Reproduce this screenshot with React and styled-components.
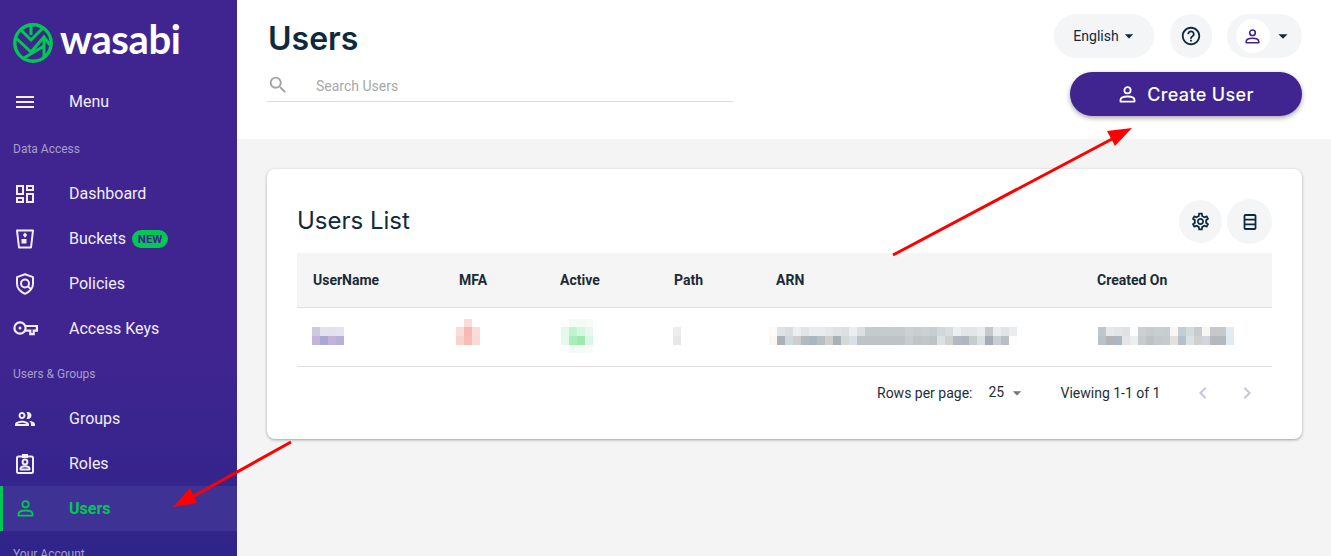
import React from "react";
import styled, { createGlobalStyle } from "styled-components";
import { MdMenu, MdOutlineDashboard, MdOutlinePeople, MdSearch, MdHelpOutline, MdArrowDropDown, MdChevronLeft, MdChevronRight, MdOutlineSettings } from "react-icons/md";

const Global = createGlobalStyle`
  html, body { margin: 0; padding: 0; height: 100%; overflow: hidden; background: #f4f4f4; }
  body { font-family: Roboto, "Liberation Sans", sans-serif; color: #0e2a3c; }
  #root { height: 100%; }
  * { box-sizing: border-box; }
`;

const Page = styled.div`
  position: relative;
  display: flex;
  width: 100%;
  height: 100vh;
  overflow: hidden;
`;
const Sidebar = styled.aside`
  flex: 0 0 237px;
  height: 100%;
  overflow: hidden;
  background: linear-gradient(180deg, #402590 0%, #402590 62%, #2f2489 100%);
  color: #fff;
`;
const LogoRow = styled.div`
  display: flex;
  align-items: center;
  gap: 7px;
  height: 79px;
  padding: 7px 0 0 13px;
`;
const LogoWord = styled.span`
  font-family: Lato, sans-serif;
  font-weight: 700;
  font-size: 40px;
  line-height: 1;
  letter-spacing: -0.4px;
  color: #fff;
  margin-top: -8px;
`;
const NavRow = styled.div`
  display: flex;
  align-items: center;
  height: 45px;
  padding-left: 13px;
  font-size: 16px;
  color: ${p => (p.$active ? "#00c853" : "#f1eef8")};
  font-weight: ${p => (p.$active ? 700 : 400)};
  background: ${p => (p.$active ? "#3f3295" : "transparent")};
  box-shadow: ${p => (p.$active ? "inset 3px 0 0 #00c853" : "none")};
`;
const NavIcon = styled.span`
  flex: 0 0 56px;
  display: flex;
  align-items: center;
  padding-left: ${p => p.$pad ?? 0}px;
`;
const SectionLabel = styled.div`
  display: flex;
  align-items: center;
  height: 45px;
  margin-top: ${p => p.$top ?? 0}px;
  padding-left: 13px;
  font-size: 12px;
  color: #a79fc6;
`;
const NewBadge = styled.span`
  display: inline-flex;
  align-items: center;
  justify-content: center;
  width: 36px;
  height: 18px;
  margin: 1px 0 0 6px;
  border-radius: 9px;
  background: #00c853;
  color: #402590;
  font-size: 11.5px;
  font-weight: 700;
`;
const Main = styled.main`
  flex: 1;
  min-width: 0;
  display: flex;
  flex-direction: column;
`;
const Header = styled.header`
  display: flex;
  justify-content: space-between;
  height: 139px;
  padding: 14px 29px 0 30px;
  background: #fff;
`;
const TitleColumn = styled.div`
  width: 466px;
`;
const Title = styled.h1`
  margin: 0 0 0 1px;
  height: 48px;
  font-family: Inter, sans-serif;
  font-size: 32px;
  font-weight: 600;
  line-height: 50px;
  color: #0e2a3c;
`;
const SearchBar = styled.div`
  display: flex;
  align-items: center;
  height: 40px;
  padding-top: 8px;
  border-bottom: 1px solid #dcdcdc;
  color: #a8a8a8;
  font-size: 14px;
`;
const SearchIcon = styled.span`
  flex: 0 0 49px;
  display: flex;
  margin-top: -1px;
  color: #a2a2a2;
`;
const RightColumn = styled.div`
  display: flex;
  flex-direction: column;
  align-items: flex-end;
  gap: 14px;
`;
const TopControls = styled.div`
  display: flex;
  height: 44px;
  gap: 15px;
`;
const Pill = styled.div`
  display: flex;
  align-items: center;
  justify-content: center;
  width: ${p => p.$w}px;
  height: 44px;
  border-radius: 22px;
  background: #f4f5f6;
  color: #0e2a3c;
  font-size: 14px;
`;
const LanguagePill = styled(Pill)`
  padding-left: 4px;
`;
const HelpPill = styled(Pill)`
  margin-left: 1px;
`;
const Avatar = styled.span`
  display: flex;
  align-items: center;
  justify-content: center;
  width: 34px;
  height: 34px;
  margin: 0 2px 0 0;
  border-radius: 50%;
  background: #fff;
  color: #402590;
`;
const CreateButton = styled.button`
  display: flex;
  align-items: center;
  justify-content: center;
  gap: 10px;
  width: 232px;
  height: 44px;
  border: 0;
  border-radius: 22px;
  background: #402590;
  color: #fff;
  font-family: Inter, sans-serif;
  font-size: 18px;
  letter-spacing: 0.35px;
  font-weight: 500;
  box-shadow: 0 2px 5px rgba(0, 0, 0, 0.35);
`;
const Content = styled.div`
  flex: 1;
  padding: 30px 29px 0 30px;
`;
const Card = styled.section`
  height: 270px;
  padding: 30px 30px 0;
  background: #fff;
  border-radius: 8px;
  box-shadow: 0 1px 3px rgba(0, 0, 0, 0.35);
`;
const CardHeader = styled.div`
  display: flex;
  align-items: center;
  justify-content: space-between;
  height: 54px;
  padding-bottom: 9px;
`;
const CardTitle = styled.h2`
  margin: -2px 0 0;
  font-family: Inter, sans-serif;
  font-size: 24px;
  font-weight: 400;
  color: #0e2a3c;
`;
const CardActions = styled.div`
  display: flex;
  align-items: center;
  gap: 5px;
`;
const RoundButton = styled.span`
  display: flex;
  align-items: center;
  justify-content: center;
  width: ${p => p.$s}px;
  height: ${p => p.$s}px;
  border-radius: 50%;
  background: #f4f5f6;
  color: #0e2a3c;
`;
const Row = styled.div`
  display: grid;
  grid-template-columns: 146px 101px 114px 102px 321px 1fr;
  padding-left: 16px;
  border-bottom: 1px solid #dedede;
`;
const HeadRow = styled(Row)`
  align-items: center;
  height: 55px;
  background: #f5f5f5;
  font-size: 14px;
  font-weight: 700;
  color: #1b2b36;
`;
const BodyRow = styled(Row)`
  align-items: start;
  height: 59px;
  padding-top: 19px;
`;
const Mosaic = styled.div`
  display: flex;
  flex-direction: column;
  margin-left: ${p => p.$x}px;
  margin-top: ${p => p.$y}px;
`;
const MosaicRow = styled.div`
  display: flex;
  height: ${p => p.$h}px;
  margin-left: ${p => p.$x ?? 0}px;
`;
const Pixel = styled.i`
  display: block;
  width: 8px;
  height: 100%;
`;
const Pagination = styled.div`
  display: flex;
  align-items: center;
  height: 52px;
  padding: 0 0 0 580px;
  font-size: 14px;
  color: #1e2e38;
`;
const RowsValue = styled.span`
  display: flex;
  align-items: center;
  margin: -3px 0 0 16px;
  width: 72px;
  color: #1e2e38;
`;
const Caret = styled.span`
  display: flex;
  margin-left: 3px;
  margin-top: 2px;
  color: #757575;
`;
const Viewing = styled.span`
  width: 131px;
`;
const Pager = styled.span`
  display: flex;
  gap: 20px;
  color: #c9c3e0;
`;
const Overlay = styled.svg`
  position: absolute;
  inset: 0;
  width: 1331px;
  height: 556px;
  pointer-events: none;
`;

const Person = ({ size = 20 }) => (
  <svg width={size} height={size} viewBox="0 0 20 20" fill="none" stroke="currentColor" strokeWidth="1.9">
    <circle cx="10" cy="5.6" r="3.3" />
    <path d="M2.6 16c0-2.6 3.3-3.9 7.4-3.9s7.4 1.3 7.4 3.9v1.4H2.6z" strokeLinejoin="round" />
  </svg>
);
const Bucket = () => (
  <svg width="18" height="20" viewBox="0 0 18 20" fill="none" stroke="currentColor" strokeWidth="2">
    <path d="M1 1.5h16l-2 17H3z" strokeLinejoin="round" />
    <path d="M9 3.5l2.2 2.6L9 8.7 6.8 6.1z" fill="currentColor" stroke="none" />
    <rect x="5.5" y="10" width="5" height="4.5" fill="currentColor" stroke="none" />
  </svg>
);
const Shield = () => (
  <svg width="18" height="22" viewBox="0 0 18 22" fill="none" stroke="currentColor" strokeWidth="2">
    <path d="M9 1.2l8 2.9v6.6c0 4.6-3.4 8-8 10.1-4.6-2.1-8-5.5-8-10.1V4.1z" strokeLinejoin="round" />
    <circle cx="9" cy="10.5" r="4" />
    <path d="M12 13.5l3 2.6" />
  </svg>
);
const Key = () => (
  <svg width="25" height="15" viewBox="0 0 25 15" fill="none" stroke="currentColor" strokeWidth="2.2">
    <circle cx="7" cy="7" r="5.6" />
    <circle cx="7" cy="7" r="1.5" fill="currentColor" stroke="none" />
    <path d="M12.5 5h11.4v4.6h-3.2v3.6h-3.4V9.6h-4.8" />
  </svg>
);
const Badge = () => (
  <svg width="18" height="20" viewBox="0 0 18 20" fill="none" stroke="currentColor" strokeWidth="2">
    <rect x="1" y="2.5" width="16" height="16.5" rx="1.5" />
    <rect x="6" y="0" width="6" height="4" fill="currentColor" stroke="none" />
    <circle cx="9" cy="8" r="2.4" />
    <path d="M4.5 15.5v-.8c0-1.6 2.1-2.5 4.5-2.5s4.5.9 4.5 2.5v.8z" strokeLinejoin="round" />
  </svg>
);
const Columns = () => (
  <svg width="14" height="16" viewBox="0 0 14 16" fill="none" stroke="currentColor" strokeWidth="1.8">
    <rect x="1.5" y="1" width="11" height="14" rx="1" />
    <path d="M1.5 5.7h11M1.5 10.3h11" />
  </svg>
);
const Logo = () => (
  <svg width="40" height="40" viewBox="0 0 40 40" fill="none" stroke="#00c853">
    <circle cx="20" cy="20" r="18.2" strokeWidth="3.4" />
    <g strokeWidth="3" fill="none">
      <path d="M18 2v10" />
      <path d="M8 7l10 10L30 5" />
      <path d="M3 15l15 14 13-15 6 8" />
      <path d="M31 14v21" />
      <path d="M11 35l20-12" />
    </g>
  </svg>
);

const user = [["#cfc8e3", "#e4e1f0", "#e4e1ef", "#e5e3f2"], ["#c2b5da", "#aca6d4", "#c2b4d8", "#b6b0da"]];
const mfa = [["#fbdcd9"], ["#fbdcd8", "#f8b9b4", "#fbdcd8"], ["#f9d2cd", "#f8bdb7", "#fadad5"]];
const active = [
  ["#fbfefc", "#f3fbf5", "#f3fbf5", "#f5fcf7"],
  ["#e5f8eb", "#c0f3d2", "#d6f6e2", "#e7f9ef"],
  ["#e6f9ec", "#a9eeb9", "#9ceab0", "#d9f7e6"],
  ["#fbfefc", "#f4fbf6", "#f4fbf6", "#f8fdf9"],
];
const path = [["#ecedef"], ["#e6e7e9"]];
const arn = [
  ["#fdfbf8", "#e0e3e5", "#d9dde0", "#ebedee", "#e0e4e6", "#e9ebed", "#e8eaec", "#e4e6e8", "#e0e3e5", "#dce0e1", "#eceeef", "#dadfe1", "#c5cacd", "#c5cacd", "#c6cbce", "#c6cbce", "#c6cbce", "#cdd1d4", "#c9ced1", "#cbd0d3", "#c6ccd2", "#d2d7db", "#d8dde0", "#eceef0", "#e2e5e8", "#e3e6e9", "#e9ebed", "#c4c9cc", "#e9ebee", "#e0e4e7", "#eaecee"],
  ["#faf7f2", "#abb1b5", "#cdd9df", "#cdcfcf", "#b0bbc0", "#a8b7c0", "#b8bfc3", "#cfcfcf", "#a7b0b7", "#d5d8d8", "#d9e1e8", "#bec3c7", "#bec3c7", "#bec3c7", "#bec3c7", "#bec3c7", "#bec3c7", "#c8cbcf", "#bfc4c8", "#c1c6c9", "#bcc3c9", "#dde0e1", "#cfd2d0", "#b3b9c0", "#b0b7be", "#c7cccd", "#d9e0e3", "#a4abb2", "#c8ced3", "#b9bfc3", "#fdfdfe"],
];
const created = [
  ["#c1c6ca", "#e6e8ea", "#e1e4e8", "#dfe1e3", "#fdfdfd", "#cbcfd2", "#c6cbce", "#c9ced1", "#c7cdd1", "#f8f6f3", "#c3cdd4", "#d5dade", "#c7cbce", "#f7f6f3", "#c5c9cc", "#c5c9cc", "#e2ebf3"],
  ["#bcc1c6", "#b1b5b8", "#abb7c1", "#e3e5e8", "#eceef1", "#c6cbce", "#bcc2c5", "#c3c8cb", "#c5cacd", "#e2e1e0", "#b6c2c9", "#dde1e5", "#cfd1d1", "#d1d5de", "#b5b9bc", "#b3babd", "#e1e9f1"],
];

const Blur = ({ rows, x, y = 0, heights = [], offsets = [] }) => (
  <Mosaic $x={x} $y={y}>
    {rows.map((r, i) => (
      <MosaicRow key={i} $h={heights[i] ?? 9} $x={offsets[i] ?? 0}>
        {r.map((c, j) => (
          <Pixel key={j} style={{ background: c }} />
        ))}
      </MosaicRow>
    ))}
  </Mosaic>
);

export default function App() {
  return (
    <Page>
      <Global />
      <Sidebar>
        <LogoRow>
          <Logo />
          <LogoWord>wasabi</LogoWord>
        </LogoRow>
        <NavRow><NavIcon><MdMenu size={24} /></NavIcon>Menu</NavRow>
        <SectionLabel $top={2}>Data Access</SectionLabel>
        <NavRow><NavIcon><MdOutlineDashboard size={24} /></NavIcon>Dashboard</NavRow>
        <NavRow><NavIcon $pad={3}><Bucket /></NavIcon>Buckets<NewBadge>NEW</NewBadge></NavRow>
        <NavRow><NavIcon $pad={3}><Shield /></NavIcon>Policies</NavRow>
        <NavRow><NavIcon><Key /></NavIcon>Access Keys</NavRow>
        <SectionLabel>Users &amp; Groups</SectionLabel>
        <NavRow><NavIcon><MdOutlinePeople size={24} /></NavIcon>Groups</NavRow>
        <NavRow><NavIcon $pad={3}><Badge /></NavIcon>Roles</NavRow>
        <NavRow $active><NavIcon $pad={3}><Person size={19} /></NavIcon>Users</NavRow>
        <SectionLabel>Your Account</SectionLabel>
      </Sidebar>
      <Main>
        <Header>
          <TitleColumn>
            <Title>Users</Title>
            <SearchBar>
              <SearchIcon><MdSearch size={22} /></SearchIcon>
              Search Users
            </SearchBar>
          </TitleColumn>
          <RightColumn>
            <TopControls>
              <LanguagePill $w={100}>English<MdArrowDropDown size={20} /></LanguagePill>
              <HelpPill $w={42}><MdHelpOutline size={22} /></HelpPill>
              <Pill $w={75}>
                <Avatar><Person size={17} /></Avatar>
                <MdArrowDropDown size={22} />
              </Pill>
            </TopControls>
            <CreateButton><Person size={19} />Create User</CreateButton>
          </RightColumn>
        </Header>
        <Content>
          <Card>
            <CardHeader>
              <CardTitle>Users List</CardTitle>
              <CardActions>
                <RoundButton $s={43}><MdOutlineSettings size={21} /></RoundButton>
                <RoundButton $s={45}><Columns /></RoundButton>
              </CardActions>
            </CardHeader>
            <HeadRow>
              <span>UserName</span>
              <span>MFA</span>
              <span>Active</span>
              <span>Path</span>
              <span>ARN</span>
              <span>Created On</span>
            </HeadRow>
            <BodyRow>
              <Blur rows={user} x={-1} />
              <Blur rows={mfa} x={-3} y={-8} heights={[8]} offsets={[8]} />
              <Blur rows={active} x={1} y={-8} heights={[8, 9, 9, 8]} />
              <Blur rows={path} x={-1} />
              <Blur rows={arn} x={-7} />
              <Blur rows={created} x={1} />
            </BodyRow>
            <Pagination>
              <span>Rows per page:</span>
              <RowsValue>25<Caret><MdArrowDropDown size={20} /></Caret></RowsValue>
              <Viewing>Viewing 1-1 of 1</Viewing>
              <Pager>
                <MdChevronLeft size={24} />
                <MdChevronRight size={24} />
              </Pager>
            </Pagination>
          </Card>
        </Content>
      </Main>
      <Overlay viewBox="0 0 1331 556">
        <path d="M893 255L1112 139" stroke="#ff0000" strokeWidth="3" />
        <path d="M1132 128L1115 146L1107 131Z" fill="#ff0000" />
        <path d="M291 442L192 497" stroke="#ff0000" strokeWidth="3" />
        <path d="M173 507L190 488L197 503Z" fill="#ff0000" />
      </Overlay>
    </Page>
  );
}
